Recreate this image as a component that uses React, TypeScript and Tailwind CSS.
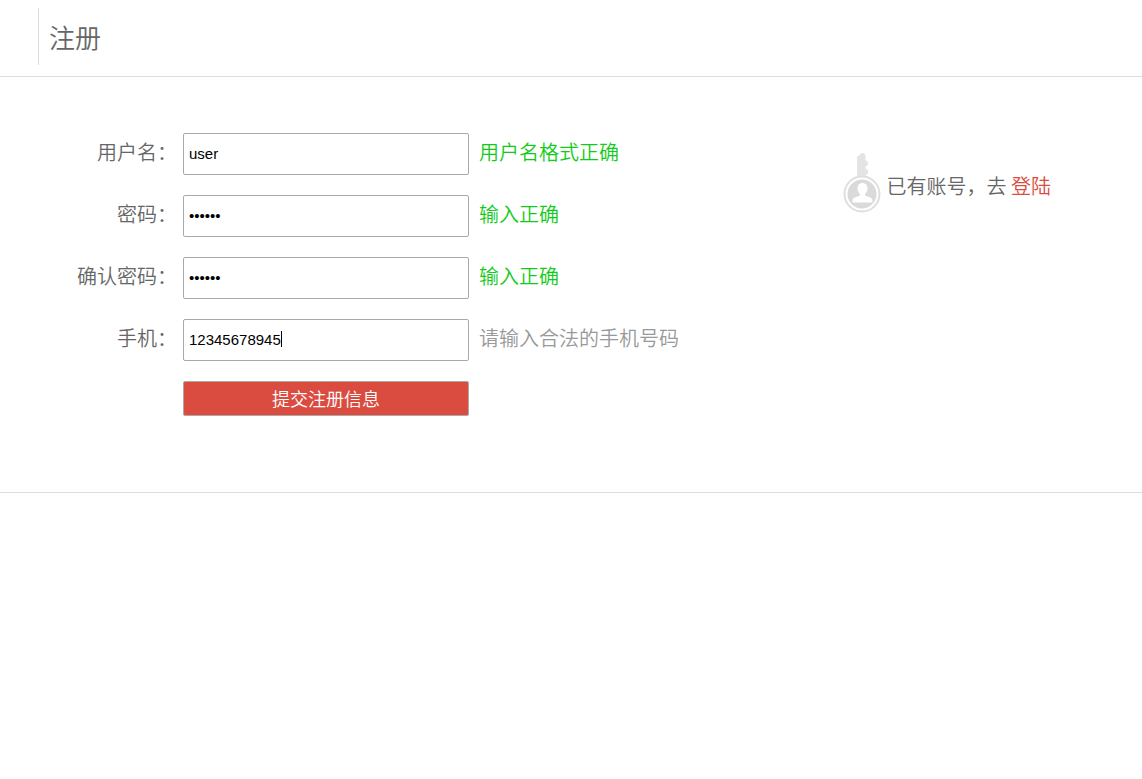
import { useState } from 'react'
import type { FormEvent } from 'react'

type HintState = 'ok' | 'info'

interface Field {
  id: string
  label: string
  type: 'text' | 'password' | 'tel'
  value: string
  hint: string
  state: HintState
}

const INITIAL_FIELDS: Field[] = [
  { id: 'username', label: '用户名', type: 'text', value: 'user', hint: '用户名格式正确', state: 'ok' },
  { id: 'password', label: '密码', type: 'password', value: '123456', hint: '输入正确', state: 'ok' },
  { id: 'confirm', label: '确认密码', type: 'password', value: '123456', hint: '输入正确', state: 'ok' },
  { id: 'phone', label: '手机', type: 'tel', value: '12345678945', hint: '请输入合法的手机号码', state: 'info' },
]

const HINT_COLORS: Record<HintState, string> = {
  ok: 'text-[#10cc18]',
  info: 'text-[#999999]',
}

function KeyIcon() {
  return (
    <svg className="h-[62px] w-[38px] shrink-0" viewBox="0 0 38 62" aria-hidden="true">
      {/* blade */}
      <path
        d="M14 26V5L18.500 1h2l2 2v5l2.500 2v3L22.500 14.500v2l2.500 1.500v3.500L23 23v3z"
        fill="#e4e4e4"
      />
      {/* bow */}
      <circle cx="19" cy="42" r="17.500" fill="#fff" stroke="#dfdfdf" strokeWidth="2" />
      <circle cx="19" cy="42" r="14.500" fill="#dadada" />
      {/* person */}
      <path
        d="M19.500 31c-3.200 0-5 2.200-5 5.200 0 2.400 1 4.600 2.500 5.700v1.600c-2.500 1.200-6 1.600-7 3.300-.5.900-.5 2.200-.5 3.700h20c0-1.500 0-2.800-.5-3.700-1-1.700-4.500-2.100-7-3.300v-1.600c1.500-1.100 2.500-3.300 2.500-5.700 0-3-1.800-5.200-5-5.200z"
        fill="#fff"
      />
    </svg>
  )
}

export default function App() {
  const [fields, setFields] = useState(INITIAL_FIELDS)
  const [focused, setFocused] = useState<string | null>('phone')

  const handleChange = (id: string, value: string) => {
    setFields((prev) => prev.map((f) => (f.id === id ? { ...f, value } : f)))
  }

  const handleSubmit = (e: FormEvent) => {
    e.preventDefault()
  }

  return (
    <div className="bg-white font-['Noto_Sans_CJK_SC',sans-serif] text-xl font-[350] text-[#666666]">
      <header className="border-b border-[#dddddd] pt-2 pb-[11px] pl-[38px]">
        <h1 className="flex h-[57px] items-center border-l border-[#dddddd] pt-0.5 pl-2.5 text-[26px] font-[350]">
          注册
        </h1>
      </header>

      <main className="flex items-start justify-between border-b border-[#dddddd] pt-14 pr-[91px] pb-[76px]">
        <form onSubmit={handleSubmit} className="flex flex-col gap-5">
          {fields.map((field) => (
            <div key={field.id} className="flex h-[42px] items-center">
              <label htmlFor={field.id} className="w-[177px] pb-1 text-right">
                {field.label}：
              </label>
              <div className="relative ml-1.5 font-['Liberation_Sans',sans-serif] text-[15px] font-normal text-black">
                <input
                  id={field.id}
                  type={field.type}
                  value={field.value}
                  autoFocus={field.id === 'phone'}
                  onFocus={() => setFocused(field.id)}
                  onBlur={() => setFocused(null)}
                  onChange={(e) => handleChange(field.id, e.target.value)}
                  className={`block h-[42px] w-[286px] rounded-xs border border-[#a9a9a9] px-[5px] pb-0.5 outline-none ${
                    field.type === 'tel' ? 'caret-transparent' : ''
                  }`}
                />
                {/* Steady caret: digits are all 1ch wide */}
                {field.type === 'tel' && focused === field.id && (
                  <span
                    className="pointer-events-none absolute top-3 h-4 w-px bg-black"
                    style={{ left: `calc(6px + ${field.value.length}ch)` }}
                  />
                )}
              </div>
              <span className={`ml-2.5 pb-1 ${HINT_COLORS[field.state]}`}>{field.hint}</span>
            </div>
          ))}
          <button
            type="submit"
            className="ml-[183px] h-[35px] w-[286px] rounded-xs border border-[#a9a9a9] bg-[#db4c40] pb-0.5 text-lg leading-none font-[350] text-white"
          >
            提交注册信息
          </button>
        </form>

        <div className="mt-[19px] flex items-center gap-1.5">
          <KeyIcon />
          <p className="pt-1.5">
            已有账号，去{' '}
            <a href="#login" className="text-[#db4c40]">
              登陆
            </a>
          </p>
        </div>
      </main>
    </div>
  )
}
